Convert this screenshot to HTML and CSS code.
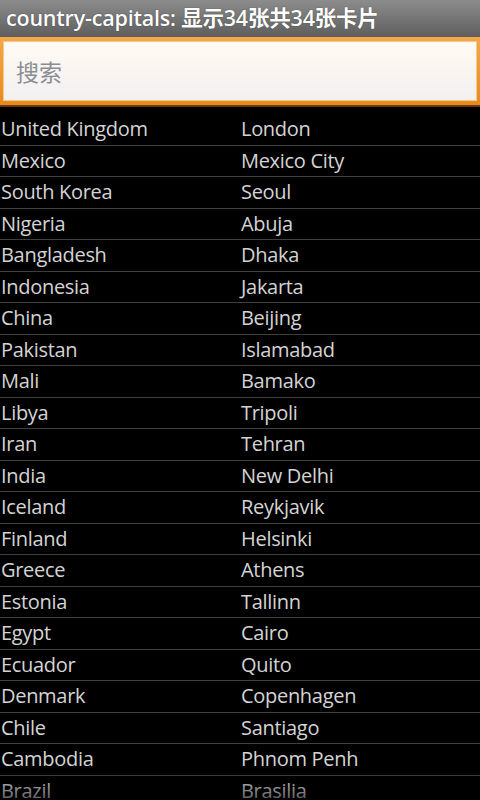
FILE: index.html
```html
<!DOCTYPE html>
<html>
<head>
<meta charset="utf-8">
<link rel="stylesheet" href="styles.css">
</head>
<body>
<div class="title">country-capitals: 显示34张共34张卡片</div>
<div class="search"><div class="field">搜索</div></div>
<div class="list">
<div class="row"><span class="c">United Kingdom</span><span class="c">London</span></div>
<div class="row"><span class="c">Mexico</span><span class="c">Mexico City</span></div>
<div class="row"><span class="c">South Korea</span><span class="c">Seoul</span></div>
<div class="row"><span class="c">Nigeria</span><span class="c">Abuja</span></div>
<div class="row"><span class="c">Bangladesh</span><span class="c">Dhaka</span></div>
<div class="row"><span class="c">Indonesia</span><span class="c">Jakarta</span></div>
<div class="row"><span class="c">China</span><span class="c">Beijing</span></div>
<div class="row"><span class="c">Pakistan</span><span class="c">Islamabad</span></div>
<div class="row"><span class="c">Mali</span><span class="c">Bamako</span></div>
<div class="row"><span class="c">Libya</span><span class="c">Tripoli</span></div>
<div class="row"><span class="c">Iran</span><span class="c">Tehran</span></div>
<div class="row"><span class="c">India</span><span class="c">New Delhi</span></div>
<div class="row"><span class="c">Iceland</span><span class="c">Reykjavik</span></div>
<div class="row"><span class="c">Finland</span><span class="c">Helsinki</span></div>
<div class="row"><span class="c">Greece</span><span class="c">Athens</span></div>
<div class="row"><span class="c">Estonia</span><span class="c">Tallinn</span></div>
<div class="row"><span class="c">Egypt</span><span class="c">Cairo</span></div>
<div class="row"><span class="c">Ecuador</span><span class="c">Quito</span></div>
<div class="row"><span class="c">Denmark</span><span class="c">Copenhagen</span></div>
<div class="row"><span class="c">Chile</span><span class="c">Santiago</span></div>
<div class="row"><span class="c">Cambodia</span><span class="c">Phnom Penh</span></div>
<div class="row"><span class="c">Brazil</span><span class="c">Brasilia</span></div>
<div class="fade"></div>
</div>
</body>
</html>
```
FILE: styles.css
```css
html, body {
  margin: 0;
  padding: 0;
  background: #000;
  width: 480px;
  height: 800px;
  overflow: hidden;
  font-family: "Open Sans", "Noto Sans", "Noto Sans CJK SC", sans-serif;
}
.title {
  height: 37px;
  box-sizing: border-box;
  padding: 1px 0 0 6px;
  background: linear-gradient(#8c8c8c, #5e5e5e);
  color: #fff;
  font-size: 21.5px;
  font-weight: 600;
  line-height: 34px;
  letter-spacing: -0.2px;
  text-shadow: 0 0 1px #333;
  white-space: nowrap;
}
.search {
  height: 70px;
  box-sizing: border-box;
  padding: 4px 3px 4px 3px;
  background: linear-gradient(#f5a84a, #e88a1c);
  border-bottom: 2px solid #6a3a08;
}
.field {
  height: 100%;
  box-sizing: border-box;
  background: linear-gradient(#fffaf2, #f3f0f2);
  border: 1px solid #f6c88a;
  color: #8a8e92;
  font-family: "Noto Sans CJK SC", sans-serif;
  font-size: 23px;
  line-height: 58px;
  padding-left: 12px;
}
.list {
  position: relative;
  padding-top: 7px;
}
.row {
  display: grid;
  grid-template-columns: 240px 1fr;
  height: 31.5px;
  box-sizing: border-box;
  border-bottom: 1px solid #3e3e3e;
  color: #d4d4d4;
  font-size: 20px;
  line-height: 30px;
  letter-spacing: -0.3px;
}
.c {
  padding-left: 1px;
  white-space: nowrap;
}
.fade {
  position: absolute;
  left: 0;
  right: 0;
  top: 665px;
  height: 40px;
  background: linear-gradient(rgba(0,0,0,0), rgba(0,0,0,0.8));
}
```
